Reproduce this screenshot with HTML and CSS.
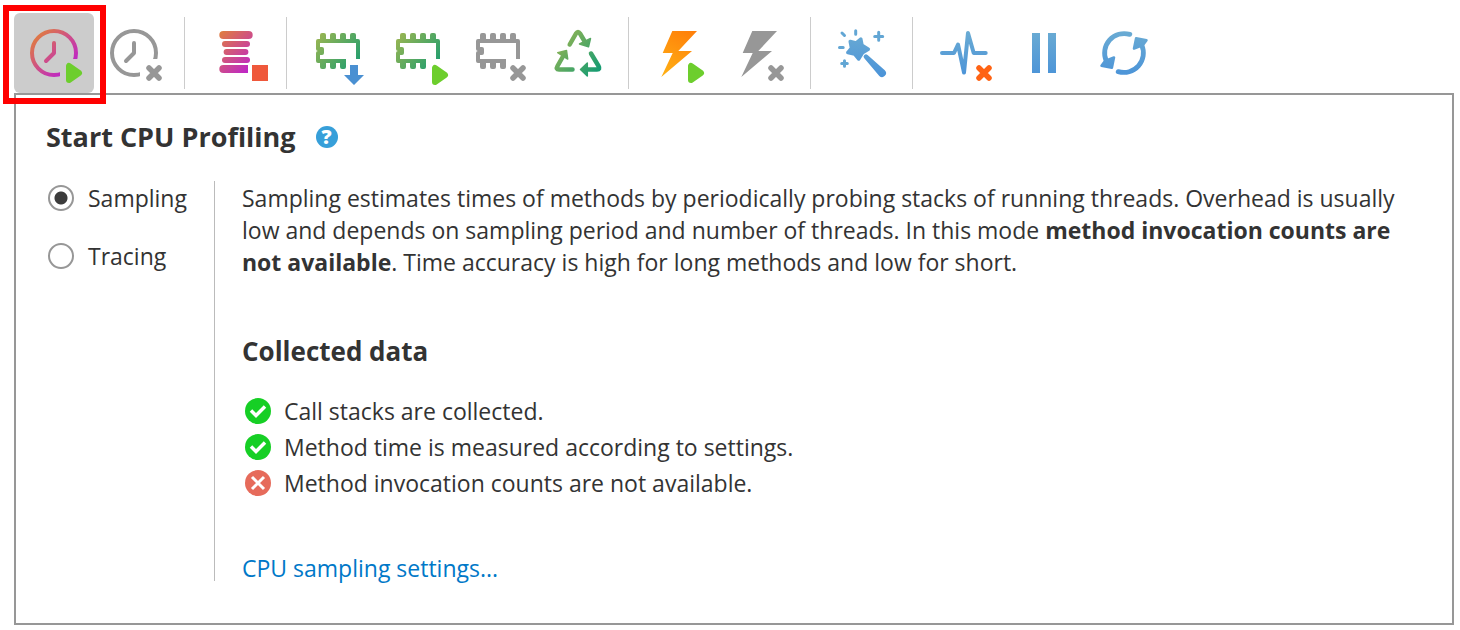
FILE: index.html
```html
<!DOCTYPE html>
<html lang="en">
<head>
    <meta charset="UTF-8">
    <meta name="viewport" content="width=device-width, initial-scale=1.0">
    <title>Start CPU Profiling</title>
    <link rel="stylesheet" href="styles.css">
</head>
<body>
    <!-- shared gradients, clips and badges -->
    <svg class="defs" width="0" height="0" aria-hidden="true">
        <defs>
            <linearGradient id="gPink" gradientUnits="userSpaceOnUse" x1="20" y1="20" x2="58" y2="58">
                <stop offset="0" stop-color="#e1803a"/>
                <stop offset="1" stop-color="#bb1fd2"/>
            </linearGradient>
            <linearGradient id="gGreen" gradientUnits="userSpaceOnUse" x1="18" y1="20" x2="62" y2="56">
                <stop offset="0" stop-color="#9fb650"/>
                <stop offset="1" stop-color="#169c72"/>
            </linearGradient>
            <linearGradient id="gOrange" gradientUnits="userSpaceOnUse" x1="50" y1="18" x2="26" y2="64">
                <stop offset="0" stop-color="#ff800a"/>
                <stop offset="1" stop-color="#ffb014"/>
            </linearGradient>
            <linearGradient id="gBlue" gradientUnits="userSpaceOnUse" x1="0" y1="18" x2="0" y2="62">
                <stop offset="0" stop-color="#6aabd3"/>
                <stop offset="1" stop-color="#4c94d8"/>
            </linearGradient>
            <clipPath id="cutCorner">
                <path d="M0 0H80V46H46V80H0z"/>
            </clipPath>
            <g id="clock" fill="none" stroke-width="4" stroke-linecap="round" stroke-linejoin="round">
                <circle cx="40" cy="40" r="22" clip-path="url(#cutCorner)"/>
                <path d="M40 30V40L32 48"/>
            </g>
            <g id="chip">
                <path d="M60 46V28H20V36H24V40H20V48H48" fill="none" stroke-width="4" stroke-linejoin="round"/>
                <path stroke="none" d="M22 27V22q0-2 2-2h2q2 0 2 2v5zM32 27V22q0-2 2-2h2q2 0 2 2v5zM42 27V22q0-2 2-2h2q2 0 2 2v5zM52 27V22q0-2 2-2h2q2 0 2 2v5zM22 49v5q0 2 2 2h2q2 0 2-2v-5zM32 49v5q0 2 2 2h2q2 0 2-2v-5zM42 49v5q0 2 2 2h2q2 0 2-2v-5z"/>
            </g>
            <path id="bolt" d="M32.3 18H57L38.3 38H52L21.3 64L32.7 40H22.7z"/>
            <path id="play" d="M3 3V17L13 10z" fill="#6dce2d" stroke="#6dce2d" stroke-width="6" stroke-linejoin="round"/>
            <path id="cross" d="M3 3L13 13M13 3L3 13" fill="none" stroke-width="5.5" stroke-linecap="round"/>
            <g id="okMark">
                <circle cx="14" cy="14" r="13" fill="#16cf25"/>
                <path d="M7 13.5L12 18.500L21 9.500" fill="none" stroke="#fff" stroke-width="3.500"/>
            </g>
        </defs>
    </svg>

    <div class="toolbar" role="toolbar" aria-label="Profiler actions">
        <button class="tool tool-active" type="button" aria-label="Start CPU profiling">
            <svg viewBox="0 0 80 80">
                <use href="#clock" stroke="url(#gPink)"/>
                <use href="#play" x="52" y="50"/>
            </svg>
        </button>
        <button class="tool" type="button" aria-label="Stop CPU profiling">
            <svg viewBox="0 0 80 80" stroke="#979797">
                <use href="#clock"/>
                <use href="#cross" x="52" y="52"/>
            </svg>
        </button>
        <span class="divider"></span>
        <button class="tool" type="button" aria-label="Stop thread profiling">
            <svg viewBox="0 0 80 80" fill="url(#gPink)">
                <rect x="23.3" y="18" width="33.4" height="8" rx="4"/>
                <rect x="26" y="28" width="28" height="6" rx="3"/>
                <rect x="27.6" y="36" width="24.8" height="6" rx="3"/>
                <rect x="26" y="44" width="28" height="6" rx="3"/>
                <path d="M52 52H27.3a4 4 0 0 0 0 8H52z"/>
                <rect x="56" y="52" width="16" height="16" fill="#ef583b"/>
            </svg>
        </button>
        <span class="divider"></span>
        <button class="tool" type="button" aria-label="Capture memory snapshot">
            <svg viewBox="0 0 80 80">
                <use href="#chip" fill="url(#gGreen)" stroke="url(#gGreen)"/>
                <path d="M52 52h8v10h6L56 72L46 62h6z" fill="#4a90d2"/>
            </svg>
        </button>
        <button class="tool" type="button" aria-label="Start allocation recording">
            <svg viewBox="0 0 80 80">
                <use href="#chip" fill="url(#gGreen)" stroke="url(#gGreen)"/>
                <use href="#play" x="54" y="52"/>
            </svg>
        </button>
        <button class="tool" type="button" aria-label="Stop allocation recording">
            <svg viewBox="0 0 80 80" fill="#979797" stroke="#979797">
                <use href="#chip"/>
                <use href="#cross" x="52" y="52"/>
            </svg>
        </button>
        <button class="tool" type="button" aria-label="Force garbage collection">
            <svg viewBox="0 0 80 80">
                <g fill="none" stroke="url(#gGreen)" stroke-width="4.5" stroke-linecap="round" stroke-linejoin="round">
                    <path d="M31.7 31.5L38 20.5Q40 17.5 42 20.5L47 29"/>
                    <path d="M34.5 56.5H21Q17.5 56.5 19.5 53L25.5 42.5"/>
                    <path d="M53 40.5L60.5 53Q62.5 56.5 59 56.5H49"/>
                </g>
                <g fill="url(#gGreen)" stroke="url(#gGreen)" stroke-width="1.5" stroke-linejoin="round">
                    <path d="M41.5 31L52.5 25.5L50.5 33.7z"/>
                    <path d="M19.7 39.7L28.5 37.5L29.7 46z"/>
                    <path d="M42.5 56.5L49.3 50V63z"/>
                </g>
            </svg>
        </button>
        <span class="divider"></span>
        <button class="tool" type="button" aria-label="Start exception profiling">
            <svg viewBox="0 0 80 80">
                <use href="#bolt" fill="url(#gOrange)"/>
                <use href="#play" x="48" y="50"/>
            </svg>
        </button>
        <button class="tool" type="button" aria-label="Stop exception profiling">
            <svg viewBox="0 0 80 80">
                <use href="#bolt" fill="#979797"/>
                <use href="#cross" x="48" y="52" stroke="#979797"/>
            </svg>
        </button>
        <span class="divider"></span>
        <button class="tool" type="button" aria-label="Wizard">
            <svg viewBox="0 0 80 80" fill="url(#gBlue)">
                <path d="M28.2 28.5L34 30L38.8 26L40 32.3L46.3 36.3L40.5 39.8L36.6 46L32.5 41L25.8 39.5L29.5 35z" stroke="url(#gBlue)" stroke-width="3.5" stroke-linejoin="round"/>
                <path d="M42.3 45.3A2.3 2.3 0 0 1 45.6 42L62.8 57.3A3.9 3.9 0 0 1 57.3 62.9z"/>
                <path d="M20 20L22.5 22.5M33.7 17.7V21.3M17.5 34.5H21.2M56.7 19.3V27.3M52.7 23.5H60.7M22.5 47.7V53.3M19.7 50.5H25.3" fill="none" stroke="#62a6d4" stroke-width="3" stroke-linecap="round"/>
            </svg>
        </button>
        <span class="divider"></span>
        <button class="tool" type="button" aria-label="Clear telemetry">
            <svg viewBox="0 0 80 80">
                <path d="M18 40H30L34 31.5L40 59.5L44 20L49.7 40H61.7" fill="none" stroke="url(#gBlue)" stroke-width="4" stroke-linecap="round" stroke-linejoin="round"/>
                <use href="#cross" x="52" y="52" stroke="#ff6314"/>
            </svg>
        </button>
        <button class="tool" type="button" aria-label="Pause">
            <svg viewBox="0 0 80 80">
                <path d="M28 20h8v40h-8zM44 20h8v40h-8z" fill="url(#gBlue)"/>
            </svg>
        </button>
        <button class="tool" type="button" aria-label="Refresh">
            <svg viewBox="0 0 80 80" fill="url(#gBlue)" stroke="url(#gBlue)" stroke-linejoin="round">
                <path d="M45.8 21.4A19.5 19.5 0 0 0 22.3 48" fill="none" stroke-width="4.8" stroke-linecap="round"/>
                <path d="M34.2 58.6A19.5 19.5 0 0 0 57.7 32" fill="none" stroke-width="4.8" stroke-linecap="round"/>
                <path d="M17.5 52.7L21 48L30 44.5L27.9 54.7z" stroke-width="2.5"/>
                <path d="M62.5 27.3L59 32L50 35.5L52.1 25.3z" stroke-width="2.5"/>
            </svg>
        </button>
    </div>

    <main class="panel">
        <div class="panel-head">
            <h1>Start CPU Profiling</h1>
            <button class="help" type="button" aria-label="Help">?</button>
        </div>
        <div class="panel-body">
            <form class="modes">
                <label class="mode" for="sampling">
                    <input type="radio" name="mode" id="sampling" checked>
                    Sampling
                </label>
                <label class="mode" for="tracing">
                    <input type="radio" name="mode" id="tracing">
                    Tracing
                </label>
            </form>
            <section class="details">
                <p>Sampling estimates times of methods by periodically probing stacks of running threads. Overhead is usually low and depends on sampling period and number of threads. In this mode <b>method invocation counts are not available</b>. Time accuracy is high for long methods and low for short.</p>
                <h2>Collected data</h2>
                <ul class="collected">
                    <li>
                        <svg viewBox="0 0 28 28"><use href="#okMark"/></svg>
                        Call stacks are collected.
                    </li>
                    <li>
                        <svg viewBox="0 0 28 28"><use href="#okMark"/></svg>
                        Method time is measured according to settings.
                    </li>
                    <li>
                        <svg viewBox="0 0 28 28">
                            <circle cx="14" cy="14" r="13" fill="#e66b5b"/>
                            <path d="M8 8L20 20M20 8L8 20" stroke="#fff" stroke-width="3"/>
                        </svg>
                        Method invocation counts are not available.
                    </li>
                </ul>
                <a class="settings" href="#settings">CPU sampling settings...</a>
            </section>
        </div>
    </main>
</body>
</html>
```
FILE: styles.css
```css
* {
    margin: 0;
    padding: 0;
    box-sizing: border-box;
}

body {
    display: flex;
    flex-direction: column;
    min-height: 100vh;
    padding: 13px 6px 5px 14px;
    background: #fff;
    color: #333;
    font-family: 'Segoe UI', 'Open Sans', 'Noto Sans', sans-serif;
    font-size: 23px;
    line-height: 32px;
}

.defs {
    position: absolute;
}

/* toolbar */
.toolbar {
    display: flex;
    align-items: center;
}

.tool {
    position: relative;
    flex: none;
    width: 80px;
    height: 80px;
    border: none;
    border-radius: 6px;
    background: none;
    cursor: pointer;
}

.tool svg {
    display: block;
    width: 80px;
    height: 80px;
}

.tool-active {
    background: #ccc;
}

.tool-active::after {
    content: "";
    position: absolute;
    inset: -8px -12px -11px -11px;
    border: 6px solid #f00;
}

.divider {
    flex: none;
    width: 1px;
    height: 72px;
    margin: 0 11px 0 10px;
    background: #ccc;
}

/* panel */
.panel {
    flex: 1;
    padding: 26px 30px 42px;
    border: 2px solid #979797;
}

.panel-head {
    display: flex;
    align-items: center;
    gap: 20px;
    margin-bottom: 28px;
}

h1,
h2 {
    font-size: 26px;
    line-height: 32px;
    font-weight: 700;
}

h1 {
    font-size: 27px;
}

.help {
    width: 22px;
    height: 22px;
    border: none;
    border-radius: 50%;
    background: #379fd9;
    color: #fff;
    font: 800 20px/22px 'Open Sans', sans-serif;
    cursor: pointer;
}

.panel-body {
    display: flex;
}

.modes {
    display: flex;
    flex-direction: column;
    gap: 26px;
    flex: none;
    width: 169px;
    padding: 1px 2px;
    border-right: 1px solid #bbb;
}

.mode {
    display: flex;
    align-items: center;
    gap: 14px;
}

.mode input {
    appearance: none;
    width: 26px;
    height: 26px;
    border: 2px solid #979797;
    border-radius: 50%;
    background: #fff;
}

.mode input:checked {
    background: radial-gradient(circle, #3c3c3c 6px, #fff 7px);
}

.details {
    flex: 1;
    padding: 1px 0 0 27px;
}

.details h2 {
    margin: 57px 0 26px;
}

.collected {
    list-style: none;
    margin-bottom: 54px;
}

.collected li {
    display: flex;
    align-items: center;
    gap: 12px;
    height: 36px;
    padding-left: 2px;
}

.collected svg {
    flex: none;
    width: 28px;
    height: 28px;
}

.settings {
    display: block;
    width: fit-content;
    line-height: 26px;
    color: #0078c8;
    text-decoration: none;
}

.settings:hover {
    text-decoration: underline;
}
```
